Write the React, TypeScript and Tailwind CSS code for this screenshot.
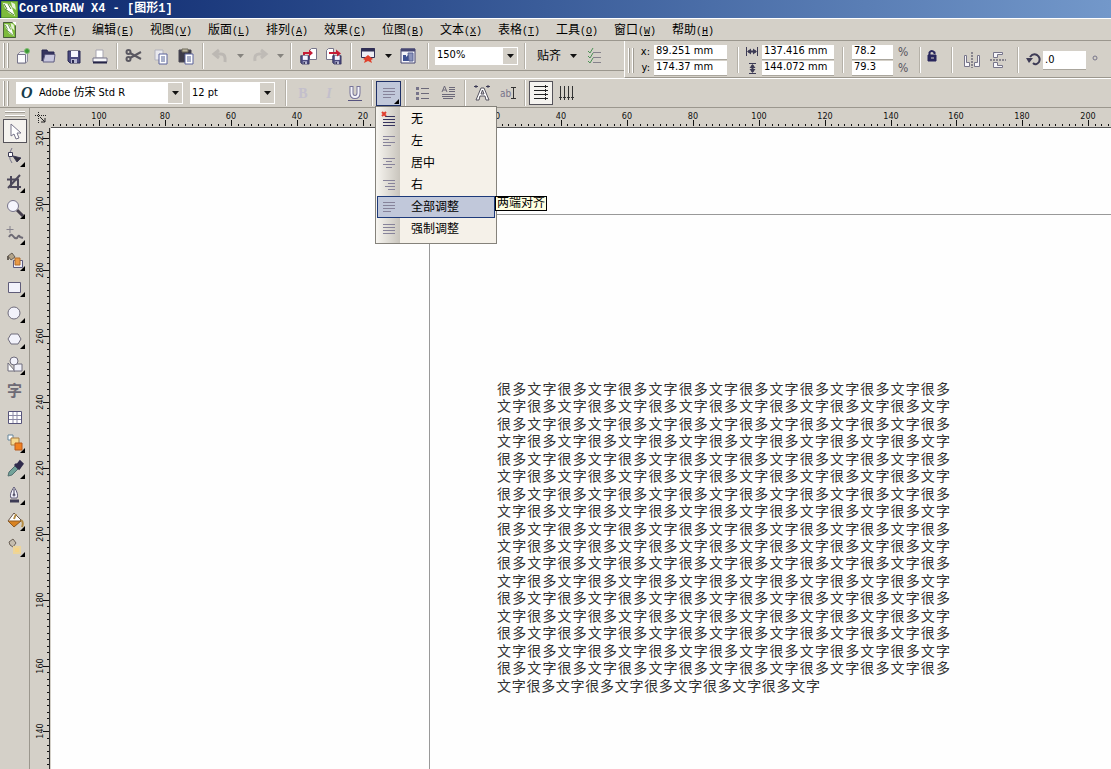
import { ReactNode, useState } from "react";

const menus = [
  ["文件", "F"], ["编辑", "E"], ["视图", "V"], ["版面", "L"], ["排列", "A"], ["效果", "C"],
  ["位图", "B"], ["文本", "X"], ["表格", "T"], ["工具", "O"], ["窗口", "W"], ["帮助", "H"],
];

const alignOptions = [
  { label: "无", kind: "none" },
  { label: "左", kind: "left" },
  { label: "居中", kind: "center" },
  { label: "右", kind: "right" },
  { label: "全部调整", kind: "full", tip: "两端对齐" },
  { label: "强制调整", kind: "force" },
];

const pattern = "很多文字".repeat(8);
const bodyLines = Array.from({ length: 17 }, (_, i) => (i % 2 ? pattern.slice(2) : pattern.slice(0, 30)));
const lastLine = pattern.slice(2, 24);

// Distance on screen of 20 mm at the current zoom
const STEP = 65.93;

const Icon = ({ children, size = 20 }: { children: ReactNode; size?: number }) => (
  <svg width={size} height={size} viewBox={`0 0 ${size} ${size}`} fill="none" stroke="#3d3b55" className="block shrink-0">
    {children}
  </svg>
);

const Caret = () => <path d="M0 0h7L3.5 4z" fill="#111" stroke="none" />;

const Corner = () => <path d="M20 15v5h-5z" fill="#000" stroke="none" />;

const Sep = ({ wide }: { wide?: boolean }) => (
  <div className={wide ? "flex w-[14px] justify-center" : "flex w-[8px] justify-center"}>
    <div className="h-[26px] w-[2px] border-l border-[#b5b1a8] bg-white" />
  </div>
);

const Grip = () => (
  <div className="flex w-[9px] shrink-0 gap-[2px] pl-[3px]">
    <div className="h-[25px] w-[2px] border-r border-[#a09c93] bg-white" />
    <div className="h-[25px] w-[2px] border-r border-[#a09c93] bg-white" />
  </div>
);

const ToolButton = ({ label, children }: { label: string; children: ReactNode }) => (
  <button type="button" aria-label={label} className="flex h-[24px] w-[26px] shrink-0 items-center justify-center">
    {children}
  </button>
);

const DropArrow = ({ label, muted }: { label: string; muted?: boolean }) => (
  <button type="button" aria-label={label} className="flex h-[24px] w-[14px] shrink-0 items-center justify-center">
    <svg width="7" height="4" className={muted ? "opacity-40" : ""}><Caret /></svg>
  </button>
);

function Combo({ label, value, className, icon }: { label: string; value: string; className: string; icon?: ReactNode }) {
  return (
    <div className={`relative flex shrink-0 items-center bg-white ${className}`}>
      {icon}
      <select aria-label={label} defaultValue={value} className="h-full min-w-0 flex-1 appearance-none bg-transparent pl-[2px] outline-none">
        <option>{value}</option>
      </select>
      <span className="pointer-events-none absolute inset-y-[1px] right-[1px] flex w-[14px] items-center justify-center bg-[#d4d0c8]">
        <svg width="7" height="4"><Caret /></svg>
      </span>
    </div>
  );
}

const Field = ({ label, value, className }: { label: string; value: string; className: string }) => (
  <input aria-label={label} defaultValue={value} className={`min-w-0 shrink-0 border-b border-[#aaa69d] bg-white pl-[2px] outline-none ${className}`} />
);

const Lines = ({ kind }: { kind: string }) => {
  const rows: Record<string, string> = {
    none: "M4 5h10M2 8h12M2 11h12M2 14h12",
    left: "M2 3h12M2 6h6M2 9h12M2 12h8",
    center: "M2 3h12M5 6h6M2 9h12M5 12h6",
    right: "M2 3h12M7 6h7M4 9h10M7 12h7",
    full: "M2 3h12M2 6h12M2 9h12M2 12h8",
    force: "M2 3h12M2 6h12M2 9h12M2 12h12",
  };
  return (
    <svg width="16" height="16" viewBox="0 0 16 16" fill="none" stroke={kind === "none" ? "#35335e" : "#87839a"} className="block shrink-0">
      <path d={rows[kind]} transform="translate(0 .5)" />
      {kind === "none" && <path d="M1 1l4 4M5 1L1 5" stroke="#e04030" strokeWidth="2" />}
    </svg>
  );
};

const Logo = ({ small }: { small?: boolean }) => (
  <svg width={small ? 13 : 17} height={small ? 16 : 17} viewBox="0 0 17 17" preserveAspectRatio="none" className="block shrink-0">
    <path d="M.5.500h16v16H.500z" fill="#7dbb3c" stroke={small ? "#33452c" : "#5d9a33"} />
    <path d="M2 2l6 1 3 4 3 8-6-3-4-5z" fill="#fff" />
    <path d="M10 1l4 2 1 6-4-3z" fill="#e6f3d5" />
    <path d="M3 3l3 5M7 3l3 5M4 8l9 6" stroke="#4d8531" />
    {small && <path d="M12 0h5v4z" fill="#fff" />}
  </svg>
);

function Disk({ x = 0, y = 0, s = 1 }: { x?: number; y?: number; s?: number }) {
  return (
    <g transform={`translate(${x} ${y}) scale(${s})`}>
      <path d="M1 1h12v12H3l-2-2z" fill="#4b4a80" stroke="#292852" />
      <path d="M4 1h7v6H4z" fill="#f5f5ff" stroke="none" />
      <path d="M4 9h6v4H4z" fill="#b6b6d0" stroke="none" />
      <path d="M5 10h2v3H5z" fill="#292852" stroke="none" />
    </g>
  );
}

function StandardBar() {
  return (
    <div className="flex h-[30px] w-[624px] shrink-0 items-center border-b border-[#9b978e]">
      <Grip />
      <ToolButton label="新建">
        <Icon><path d="M5.500 8.500l3-3h7v10l-2 1.500h-8z" fill="#e9e9ef" stroke="#918f9e" /><path d="M5.500 8.500h8v8.500h-8z" fill="#fbfbfd" stroke="#77758a" /><circle cx="15" cy="5" r="2.500" fill="#3b9a35" stroke="#83bd75" /></Icon>
      </ToolButton>
      <ToolButton label="打开">
        <Icon><path d="M4 4h5l1 2h6v3H7L4 15z" fill="#35345f" stroke="#292852" /><path d="M7 8.500h10l-1 7.500H5z" fill="#c9c8df" stroke="#5e5c80" /></Icon>
      </ToolButton>
      <ToolButton label="保存"><Icon><Disk x={3} y={4} /></Icon></ToolButton>
      <ToolButton label="打印">
        <Icon><path d="M6 4h7v8H6z" fill="#fff" stroke="#a7a5b1" /><path d="M3 12h14v4H3z" fill="#f4f4f7" stroke="#77758a" /><path d="M3 16.500h14" stroke="#252447" strokeWidth="2" /></Icon>
      </ToolButton>
      <Sep />
      <ToolButton label="剪切">
        <Icon><g stroke="#5a5861" strokeWidth="2"><circle cx="4.500" cy="6" r="2" /><circle cx="4.500" cy="13" r="2" /><path d="M6 7l11 6M6 12l11-6" /></g></Icon>
      </ToolButton>
      <ToolButton label="复制">
        <Icon><path d="M5 4h8v10H5z" fill="#e9e9ee" stroke="#b2b2bd" /><path d="M9 8h8v10H9z" fill="#fff" stroke="#5a639b" /><path d="M11 11h4M11 13h4M11 15h4" stroke="#536094" /></Icon>
      </ToolButton>
      <ToolButton label="粘贴">
        <Icon><path d="M3 4h12v12H3z" fill="#3d3b48" stroke="#4b4855" /><path d="M6 3h6v3H6z" fill="#bbb49c" stroke="#6e6a5b" /><path d="M9 8h8v10H9z" fill="#fff" stroke="#5a639b" /><path d="M11 11h4M11 13h4M11 15h4" stroke="#536094" /></Icon>
      </ToolButton>
      <Sep />
      <ToolButton label="撤消"><Icon><path d="M9 4L4 8l5 4M5 8h6q5 0 4 8" stroke="#bcb8b3" strokeWidth="3" /></Icon></ToolButton>
      <DropArrow label="撤消列表" muted />
      <ToolButton label="重做"><Icon><path d="M11 4l5 4-5 4M15 8H9q-5 0-4 7" stroke="#bfbbb6" strokeWidth="3" /></Icon></ToolButton>
      <DropArrow label="重做列表" muted />
      <Sep />
      <ToolButton label="导入">
        <Icon><path d="M11.500 4.500l2-2h5v11h-7z" fill="#fff" stroke="#77758a" /><Disk x={2} y={9} s={0.7} /><path d="M5 9V6h6V3.500l4 3.500-4 3.500V8H7v1z" fill="#c51c36" stroke="none" /></Icon>
      </ToolButton>
      <ToolButton label="导出">
        <Icon><path d="M2.500 4.500l2-2h5v11h-7z" fill="#fff" stroke="#77758a" /><Disk x={8} y={9} s={0.7} /><path d="M5 6h7V3.500l5 4-4 3V8H5z" fill="#c51c36" stroke="none" /></Icon>
      </ToolButton>
      <Sep />
      <ToolButton label="应用程序启动器">
        <Icon><path d="M3.500 2.500h13v9h-13z" fill="#eeeef5" stroke="#302f55" /><path d="M3 4h14" stroke="#302f55" strokeWidth="3" /><path d="M10 9l5 4-2 1 1 3-4-2-4 2 1-3-2-1z" fill="#e0402c" stroke="none" /></Icon>
      </ToolButton>
      <DropArrow label="应用程序列表" />
      <ToolButton label="欢迎屏幕">
        <Icon><path d="M3 3h14v14H3z" fill="#f4f4f9" stroke="#474772" /><path d="M3 4h14" stroke="#474772" strokeWidth="3" /><path d="M5 9h3v2l2-2h1v6H5z" fill="#3f5292" stroke="none" /><path d="M10 7h5v8h-4z" fill="#8c94bb" stroke="#596395" /></Icon>
      </ToolButton>
      <Sep wide />
      <Combo label="缩放级别" value="150%" className="h-[18px] w-[83px]" />
      <Sep wide />
      <button type="button" className="w-[34px] shrink-0 text-center text-[12px]">贴齐</button>
      <DropArrow label="贴齐选项" />
      <div className="flex pl-[2px]">
        <ToolButton label="选项">
          <Icon><path d="M3 5l2 2 3-5M3 10l2 2 3-5M3 15l2 2 3-5" stroke="#499153" /><path d="M8 6.500h8M8 11.500h8M8 16.500h8" stroke="#85828b" /></Icon>
        </ToolButton>
      </div>
    </div>
  );
}

function PropertyBar() {
  return (
    <div className="flex h-[37px] min-w-0 flex-1 items-center border-b border-l border-b-[#9b978e] border-l-white pt-[2px]">
      <Grip />
      <div className="flex w-[20px] shrink-0 flex-col items-end pr-[4px] leading-[16px]">
        <span>x:</span><span>y:</span>
      </div>
      <div className="flex flex-col gap-[1px]">
        <Field label="x" value="89.251 mm" className="h-[15px] w-[73px]" />
        <Field label="y" value="174.37 mm" className="h-[15px] w-[73px]" />
      </div>
      <div className="pl-[4px]"><Sep wide /></div>
      <svg width="14" height="30" viewBox="0 0 14 30" fill="none" stroke="#3d3b55" className="shrink-0">
        <path d="M1.500 2v9M12.500 2v9M4 18.500h7M4 28.500h7" />
        <path d="M3 6.500h8M7.500 20v7" strokeWidth="2" />
        <path d="M2 6.500l4-3v6zM12 6.500l-4-3v6zM7.500 19l3 4h-6zM7.500 28l3-4h-6z" fill="#3d3b55" stroke="none" />
      </svg>
      <div className="flex flex-col gap-[1px] pl-[3px]">
        <Field label="宽度" value="137.416 mm" className="h-[15px] w-[72px]" />
        <Field label="高度" value="144.072 mm" className="h-[15px] w-[72px]" />
      </div>
      <div className="px-[2px]"><Sep wide /></div>
      <div className="flex flex-col gap-[1px]">
        <Field label="水平缩放" value="78.2" className="h-[15px] w-[41px]" />
        <Field label="垂直缩放" value="79.3" className="h-[15px] w-[41px]" />
      </div>
      <div className="flex w-[20px] shrink-0 flex-col pl-[5px] text-[12px] leading-[16px] text-[#55535c]">
        <span>%</span><span>%</span>
      </div>
      <Sep wide />
      <div className="pb-[8px]">
        <button type="button" aria-label="锁定比率" className="block">
          <svg width="10" height="12" viewBox="0 0 10 12" fill="none" stroke="#29275c"><path d="M2.500 6V2.500q2-3 5 0V4" strokeWidth="2" /><path d="M1 5h8v6H1z" fill="#29275c" /><path d="M4 8h3" stroke="#d4d0c8" /></svg>
        </button>
      </div>
      <div className="flex items-center pl-[8px]">
        <Sep wide />
        <ToolButton label="水平镜像">
          <Icon><path d="M2.500 5.500h2v7h3v4h-5zM17.500 5.500h-2v7h-3v4h5z" fill="#f7f6fa" stroke="#77758a" /><path d="M10 2v16" strokeDasharray="2 1" /></Icon>
        </ToolButton>
        <ToolButton label="垂直镜像">
          <Icon><path d="M5.500 2.500h9v2h-5v3h-4zM5.500 17.500h9v-2h-5v-3h-4z" fill="#f7f6fa" stroke="#77758a" /><path d="M2 10h16" strokeDasharray="2 1" /></Icon>
        </ToolButton>
        <Sep wide />
        <Icon size={18}><path d="M5 6q3-4 7-2 4 3 2 7-3 4-6 1" strokeWidth="2" /><path d="M1 7h7l-4 5z" fill="#3d3b55" stroke="none" /></Icon>
        <Field label="旋转角度" value=".0" className="h-[19px] w-[43px]" />
        <svg width="14" height="14" className="ml-[2px] shrink-0" fill="none" stroke="#77758a"><circle cx="7" cy="5" r="2" /></svg>
      </div>
    </div>
  );
}

function AlignMenu() {
  const [selected, setSelected] = useState("full");
  return (
    <div className="relative z-20">
      <button type="button" aria-label="水平对齐" aria-expanded className="relative flex h-[25px] w-[25px] items-center justify-center border border-[#1d2f66] bg-[#c1c8da]">
        <Lines kind="full" />
        <svg width="5" height="5" className="absolute right-[1px] bottom-[1px]"><path d="M5 0v5H0z" fill="#000" /></svg>
      </button>
      <ul role="menu" className="absolute top-[25px] left-[-1px] w-[122px] border border-[#85827b] bg-[#f5f1e9] bg-[linear-gradient(90deg,#f7f5f0,#c9c5bd_24px,#f5f1e9_24px)] pt-[1px] pb-[3px]">
        {alignOptions.map((o) => (
          <li key={o.kind} className="relative px-[1px]">
            <button
              type="button"
              role="menuitem"
              onClick={() => setSelected(o.kind)}
              className={`flex h-[22px] w-full items-center border pl-[3px] text-[12px] ${selected === o.kind ? "border-[#1d3a7a] bg-[#c1c8da]" : "border-transparent"}`}
            >
              <Lines kind={o.kind} />
              <span className="pl-[14px]">{o.label}</span>
            </button>
            {o.tip && selected === o.kind && (
              <span role="tooltip" className="absolute top-0 left-[119px] border border-black bg-[#ffffe1] px-[1px] text-[12px] leading-[13px] whitespace-nowrap">
                {o.tip}
              </span>
            )}
          </li>
        ))}
      </ul>
    </div>
  );
}

function TextBar() {
  return (
    <div className="flex h-[30px] shrink-0 items-center border-t border-b border-t-white border-b-[#9b978e]">
      <Grip />
      <div className="flex gap-[7px] px-[7px]">
        <Combo
          label="字体"
          value="Adobe 仿宋 Std R"
          className="h-[22px] w-[167px]"
          icon={<span className="w-[21px] pl-[5px] font-['Liberation_Serif',serif] text-[16px] font-bold text-[#173d4c] italic">O</span>}
        />
        <Combo label="字号" value="12 pt" className="h-[22px] w-[85px]" />
      </div>
      <Sep />
      <button type="button" aria-label="粗体" className="w-[26px] shrink-0 font-['Liberation_Serif',serif] text-[14px] font-bold text-[#c3bfcc]">B</button>
      <button type="button" aria-label="斜体" className="w-[26px] shrink-0 font-['Liberation_Serif',serif] text-[14px] font-bold text-[#c3bfcc] italic">I</button>
      <ToolButton label="下划线">
        <Icon><path d="M6.500 3v7q0 4 3.500 4t3.500-4V3" stroke="#77749a" strokeWidth="4" /><path d="M6.500 4v6q0 4 3.500 4t3.500-4V4" stroke="#f5f5fa" strokeWidth="2" /><path d="M3 17.500h14" stroke="#56537f" /></Icon>
      </ToolButton>
      <Sep />
      <AlignMenu />
      <Sep />
      <ToolButton label="项目符号">
        <Icon><path d="M9 5.500h8M9 10.500h8M9 15.500h8" stroke="#6c6979" /><path d="M4 4h3v3H4zM4 9h3v3H4zM4 14h3v3H4z" fill="#77748a" stroke="none" /></Icon>
      </ToolButton>
      <ToolButton label="首字下沉">
        <Icon><path d="M4 9l2.500-6L9 9M5 7h3M11 4.500h6M11 6.500h6M11 8.500h6M4 11.500h13M4 13.500h13M5 15.500h10" stroke="#6c6979" /></Icon>
      </ToolButton>
      <Sep />
      <ToolButton label="字符格式">
        <Icon><path d="M4 17L9 5h3l5 12h-3l-1-4H8l-1 4z" fill="#fff" stroke="#55535f" /><path d="M9 11l1.500-4 1.500 4z" fill="#c9c5c9" stroke="#55535f" /><path d="M2 3.500h4M4 2v3M14 3.500h4M16 2v3" /></Icon>
      </ToolButton>
      <ToolButton label="编辑文本">
        <span className="text-[10px] text-[#77748a]">ab</span>
        <svg width="5" height="12" fill="none" stroke="#333"><path d="M0 .500h5M2.500 1v10M0 11.500h5" /></svg>
      </ToolButton>
      <Sep />
      <button type="button" aria-label="水平文本" className="flex h-[24px] w-[24px] shrink-0 items-center justify-center border border-[#55535a] bg-[#f5f3ef]">
        <Icon><path d="M3 3.500h14M3 7.500h14M3 11.500h14M3 15.500h14M14.500 2v3M14.500 6v3M14.500 10v3M14.500 14v3" stroke="#222" /></Icon>
      </button>
      <ToolButton label="垂直文本">
        <Icon><path d="M4.500 3v14M8.500 3v14M12.500 3v14M16.500 3v14M3 14.500h3M7 14.500h3M11 14.500h3M15 14.500h3" stroke="#333" /></Icon>
      </ToolButton>
    </div>
  );
}

const tools: { name: string; art: ReactNode; plain?: boolean }[] = [
  { name: "挑选工具", plain: true, art: <path d="M6 3v12l3-2 2 5 3-1-2-5h4z" fill="#fff" stroke="#77748a" /> },
  { name: "形状工具", art: <><path d="M7 1q-5 8 0 15" stroke="#77758a" /><path d="M3.500 5.500h4v4h-4z" fill="#fff" /><path d="M8 9l8 2-4 4z" fill="#33313d" /></> },
  { name: "裁剪工具", art: <><path d="M6 3v11h10M2 6.500h11V17" stroke="#4b4759" strokeWidth="2" /><path d="M3 15L15 2" stroke="#4b4759" strokeWidth="2" /></> },
  { name: "缩放工具", art: <><path d="M12 11l6 6" stroke="#443e4c" strokeWidth="3" /><circle cx="8" cy="7" r="5.500" fill="#f5f5fd" stroke="#77748a" /></> },
  { name: "手绘工具", art: <><path d="M5 1v7M1.500 4.500h7" stroke="#86838d" /><path d="M4 12q2-4 4-1t4 2q2-4 3-1l3 1" stroke="#6d6a74" strokeWidth="2" /></> },
  { name: "智能填充", art: <><path d="M3 5l4-3 3 4-4 3z" fill="#b3a48a" stroke="#665e55" /><path d="M3 5v4" stroke="#665e55" strokeWidth="2" /><path d="M8.500 9.500h9v7h-9z" fill="#eeeef8" stroke="#5b5b80" /><path d="M10 7h5v7h-5z" fill="#e99b47" stroke="#b06c2c" /></> },
  { name: "矩形工具", art: <path d="M3.500 5.500h12v10h-12z" fill="#f2f2fb" stroke="#5f5c79" /> },
  { name: "椭圆形工具", art: <circle cx="9" cy="10" r="6" fill="#f2f2fb" stroke="#6f6c7c" /> },
  { name: "多边形工具", art: <path d="M6 5h7l3 5-3 5H6l-3-5z" fill="#f2f2fb" stroke="#6f6c7c" /> },
  { name: "基本形状", art: <><path d="M3 8l7 8H3z" fill="#fff" stroke="#6f6c7c" /><path d="M9 9h8v7H9z" fill="#f2f2fb" stroke="#6f6c7c" /><circle cx="9" cy="6" r="4" fill="#f2f2fb" stroke="#6f6c7c" /></> },
  { name: "文本工具", plain: true, art: null },
  { name: "表格工具", plain: true, art: <><path d="M3.500 4.500h13v12h-13z" fill="#fff" stroke="#57547a" /><path d="M8 5v11M12 5v11M4 8.500h12M4 12.500h12" stroke="#8d8ba6" /></> },
  { name: "交互式调和", art: <><path d="M3 2h5v5H3z" fill="#fff" stroke="#65859b" /><path d="M6 5h8v7H6z" fill="#f5d990" stroke="#a97d42" /><path d="M10 10h7v7h-7z" fill="#f18120" stroke="#b85a1d" /></> },
  { name: "滴管工具", art: <><path d="M3 17l1-4 6-6 3 3-6 6z" fill="#72a39a" stroke="#536f70" /><path d="M10 5l5 5M12 7l3-4 2 2-3 4z" stroke="#302b4c" strokeWidth="3" /></> },
  { name: "轮廓工具", art: <><path d="M9 2q-5 7-3 11h6q2-4-3-11z" fill="#f5f5fd" stroke="#5d5976" /><path d="M9 4v6" /><circle cx="9" cy="10" r="1" /><path d="M5 16h9" strokeWidth="3" /></> },
  { name: "填充工具", art: <><path d="M9 2l7 7-7 7-6-6z" fill="#fff" stroke="#67564b" /><path d="M3 10h13l-7 6z" fill="#d98322" stroke="#8e5c26" /><path d="M9 8l2-5M16 9q3 2 1 7" stroke="#b38b43" strokeWidth="2" /></> },
  { name: "交互式填充", art: <><path d="M4 5l4-3 3 4-3 4-3-2z" fill="#c5bdae" stroke="#6a6056" /><path d="M9 10h6v6H9z" fill="#f6d486" stroke="#ecd59b" strokeWidth="2" /></> },
];

function Toolbox() {
  return (
    <div className="flex w-[30px] shrink-0 flex-col items-center gap-[2px] border-r border-[#9b978e] pt-[3px]">
      <div className="flex h-[6px] w-[20px] flex-col gap-[2px]">
        <div className="h-[2px] border-b border-[#a09c93] bg-white" />
        <div className="h-[2px] border-b border-[#a09c93] bg-white" />
      </div>
      {tools.map((t, i) => (
        <button
          key={t.name}
          type="button"
          aria-label={t.name}
          className={`flex h-[24px] w-[24px] shrink-0 items-center justify-center border ${i === 0 ? "border-[#55535a] bg-[#f5f3ef]" : "border-transparent"}`}
        >
          {t.art ? <Icon>{t.art}{!t.plain && <Corner />}</Icon> : <span className="text-[15px] font-bold text-[#6d6a75]">字</span>}
        </button>
      ))}
    </div>
  );
}

// Ticks every 2 mm, a longer one with its number every 20 mm
function Ruler({ vertical, origin, length }: { vertical?: boolean; origin: number; length: number }) {
  const marks = [];
  const first = Math.ceil((-origin / STEP) * 10) * 2;
  const last = Math.floor(((length - origin) / STEP) * 10) * 2;
  for (let mm = first; mm <= last; mm += 2) {
    const major = mm % 20 === 0;
    const pos = Math.round(origin + (mm / 20) * STEP);
    const len = major ? 6 : 2;
    marks.push(
      vertical ? (
        <g key={mm}>
          <rect x={19 - len} y={pos} width={len} height="1" />
          {major && <text transform={`translate(13 ${pos}) rotate(-90)`} textAnchor="middle">{Math.abs(mm)}</text>}
        </g>
      ) : (
        <g key={mm}>
          <rect x={pos} y={18 - len} width="1" height={len} />
          {major && <text x={pos} y="11" textAnchor="middle">{Math.abs(mm)}</text>}
        </g>
      )
    );
  }
  return (
    <svg className={vertical ? "h-full w-[20px] shrink-0 border-r border-[#333] text-[9px]" : "h-[20px] min-w-0 flex-1 border-b border-[#555] text-[9px]"} fill="#111">
      {marks}
    </svg>
  );
}

function Canvas() {
  return (
    <main className="relative min-w-0 flex-1 overflow-hidden bg-[#fefefe]">
      <div className="absolute top-[86px] right-0 bottom-0 left-[378px] border-t border-l border-[#999]">
        <div className="absolute top-[165px] left-[67px] grid h-[314px] w-[453px] auto-rows-fr font-['Noto_Sans_CJK_SC',sans-serif] text-[14px] leading-[17px] text-[#333]">
          {bodyLines.map((line, i) => (
            <p key={i} className="[text-align-last:justify]">{line}</p>
          ))}
          <p className="w-[323px] [text-align-last:justify]">{lastLine}</p>
        </div>
      </div>
    </main>
  );
}

export default function App() {
  return (
    <div className="flex h-screen flex-col overflow-hidden bg-[#d4d0c8] font-['DejaVu_Sans_Condensed','Noto_Sans_CJK_SC',sans-serif] text-[11px] text-black">
      <header className="flex h-[18px] shrink-0 items-center gap-[1px] bg-linear-to-r from-[#0c256c] to-[#7398ca] pl-px font-['Liberation_Mono','Noto_Sans_CJK_SC',monospace] text-[12px] font-bold text-white">
        <Logo />
        <h1 className="whitespace-pre">CorelDRAW X4 - [图形1]</h1>
      </header>
      <nav className="flex h-[23px] shrink-0 items-center border-t border-b border-t-white border-b-[#9b978e] pl-[3px] text-[12px]">
        <div className="w-[31px]"><Logo small /></div>
        {menus.map(([name, key]) => (
          <button key={key} type="button" className="w-[58px] shrink-0 text-left whitespace-nowrap">
            {name}<span className="font-['Liberation_Mono',monospace] text-[10px]">(<u>{key}</u>)</span>
          </button>
        ))}
      </nav>
      <div className="flex h-[37px] shrink-0 items-start">
        <StandardBar />
        <PropertyBar />
      </div>
      <TextBar />
      <div className="flex min-h-0 flex-1">
        <Toolbox />
        <div className="flex min-w-0 flex-1 flex-col">
          <div className="flex h-[20px] shrink-0">
            <div className="flex w-[21px] shrink-0 items-center justify-center">
              <svg width="12" height="12" fill="none" stroke="#222"><path d="M3.500 0v12M0 3.500h12" strokeDasharray="1 1" /><path d="M5 5l5 5M10 6v4H6" /></svg>
            </div>
            <Ruler origin={378} length={window.innerWidth - 51} />
          </div>
          <div className="flex min-h-0 flex-1">
            <div className="w-[21px] shrink-0"><Ruler vertical origin={1065} length={window.innerHeight - 128} /></div>
            <Canvas />
          </div>
        </div>
      </div>
    </div>
  );
}
